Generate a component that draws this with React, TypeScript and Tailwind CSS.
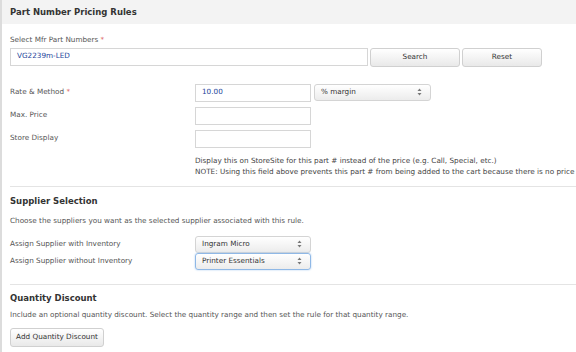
import React from 'react';

const FONT = { fontFamily: '"DejaVu Sans", Verdana, sans-serif' };

function Arrows() {
  return (
    <svg width="5" height="8" viewBox="0 0 5 8" className="absolute right-[8px] top-1/2 -translate-y-1/2">
      <path d="M2.5 0.5 L4.5 3 L0.5 3 Z" fill="#777" />
      <path d="M2.5 7.5 L4.5 5 L0.5 5 Z" fill="#777" />
    </svg>
  );
}

function FakeSelect({ value, width, focused }: { value: string; width: string; focused?: boolean }) {
  return (
    <div
      className={`relative h-[17px] ${width} rounded-[3px] border bg-gradient-to-b from-white to-[#ececec] text-[7.25px] text-[#333] flex items-center pl-[6px] ${
        focused ? 'border-[#8fb8e6] shadow-[0_0_2px_#a9cbf0]' : 'border-[#d4d4d4]'
      }`}
    >
      {value}
      <Arrows />
    </div>
  );
}

function TextBox({ value, width }: { value?: string; width: string }) {
  return (
    <div className={`h-[18px] ${width} border border-[#d6d6d6] bg-white flex items-center pl-[6px] text-[7.25px] text-[#23449a]`}>
      {value}
    </div>
  );
}

function Btn({ children, className }: { children: React.ReactNode; className?: string }) {
  return (
    <div
      className={`h-[19px] rounded-[3px] border border-[#d0d0d0] bg-gradient-to-b from-white to-[#e9e9e9] flex items-center justify-center text-[7.25px] text-[#333] ${className ?? ''}`}
    >
      {children}
    </div>
  );
}

function Row({ label, star, children, className }: { label: string; star?: boolean; children: React.ReactNode; className?: string }) {
  return (
    <div className={`flex ${className ?? ''}`}>
      <div className="w-[185px] shrink-0 pt-[3px] text-[7.25px] text-[#555]">
        {label} {star && <span className="text-[#d9534f]">*</span>}
      </div>
      {children}
    </div>
  );
}

export default function App() {
  return (
    <div style={FONT} className="w-[576px] h-[352px] overflow-hidden bg-white border-l-[2px] border-[#dcdcdc]">
      <div className="h-[24px] bg-[#f3f3f3] flex items-center px-[8px] text-[8.5px] font-bold text-[#333]">
        Part Number Pricing Rules
      </div>

      <div className="pl-[8px]">
        <div className="pt-[11px] text-[7.25px] text-[#555]">
          Select Mfr Part Numbers <span className="text-[#d9534f]">*</span>
        </div>
        <div className="mt-[2px] flex gap-[2px]">
          <TextBox value="VG2239m-LED" width="w-[358px]" />
          <Btn className="w-[90px]">Search</Btn>
          <Btn className="w-[80px]">Reset</Btn>
        </div>

        <Row label="Rate & Method" star className="mt-[17px]">
          <div className="flex gap-[3px]">
            <TextBox value="10.00" width="w-[116px]" />
            <FakeSelect value="% margin" width="w-[117px]" />
          </div>
        </Row>
        <Row label="Max. Price" className="mt-[5px]">
          <TextBox width="w-[116px]" />
        </Row>
        <Row label="Store Display" className="mt-[5px]">
          <TextBox width="w-[116px]" />
        </Row>
        <div className="pl-[185px] mt-[7px] text-[7.25px] leading-[11px] text-[#444] whitespace-nowrap">
          <div>Display this on StoreSite for this part # instead of the price (e.g. Call, Special, etc.)</div>
          <div>NOTE: Using this field above prevents this part # from being added to the cart because there is no price</div>
        </div>

        <div className="mt-[9px] border-t border-[#e4e4e4]" />
        <div className="pt-[8px] text-[8.5px] font-bold text-[#333]">Supplier Selection</div>
        <div className="mt-[8px] text-[7.25px] text-[#555]">
          Choose the suppliers you want as the selected supplier associated with this rule.
        </div>
        <Row label="Assign Supplier with Inventory" className="mt-[9px]">
          <FakeSelect value="Ingram Micro" width="w-[116px]" />
        </Row>
        <Row label="Assign Supplier without Inventory">
          <FakeSelect value="Printer Essentials" width="w-[116px]" focused />
        </Row>

        <div className="mt-[14px] border-t border-[#e4e4e4]" />
        <div className="pt-[7px] text-[8.5px] font-bold text-[#333]">Quantity Discount</div>
        <div className="mt-[6px] text-[7.25px] text-[#555]">
          Include an optional quantity discount. Select the quantity range and then set the rule for that quantity range.
        </div>
        <Btn className="mt-[7px] w-[94px]">Add Quantity Discount</Btn>
      </div>
    </div>
  );
}
